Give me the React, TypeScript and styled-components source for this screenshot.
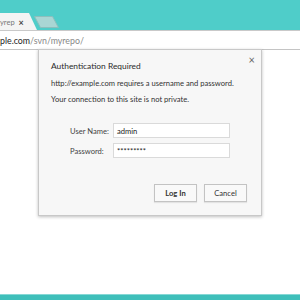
import React from "react";
import styled, { createGlobalStyle } from "styled-components";

const Global = createGlobalStyle`
  html, body { margin: 0; padding: 0; }
  body { width: 300px; height: 300px; overflow: hidden; background: #fff; font-family: Lato, "Liberation Sans", sans-serif; }
`;

const Page = styled.div`
  width: 300px;
  height: 300px;
  display: flex;
  flex-direction: column;
  overflow: hidden;
`;

const TabStrip = styled.div`
  height: 30px;
  flex: none;
  background: #4fcdc9;
  display: flex;
  align-items: flex-end;
`;

const Tab = styled.div`
  width: 37px;
  height: 17px;
  background: #f4f4f4;
  clip-path: polygon(0 0, 29px 0, 37px 100%, 0 100%);
  display: flex;
  align-items: center;
  font-size: 7.5px;
  color: #777;
  gap: 4px;
  padding-top: 1px;
  box-sizing: border-box;
`;

const TabTitle = styled.span`
  white-space: nowrap;
`;

const TabClose = styled.span`
  font-size: 9px;
  color: #444;
  font-weight: bold;
`;

const NewTab = styled.div`
  width: 17px;
  height: 10px;
  margin-bottom: 2px;
  background: #a9d6d4;
  border: 1px solid #8cbfbd;
  transform: skewX(28deg);
  border-radius: 1px;
`;

const AddressBar = styled.div`
  height: 18px;
  flex: none;
  background: #fff;
  border-top: 1px solid #c9c9c9;
  border-bottom: 1px solid #c4c4c4;
  display: flex;
  align-items: center;
`;

const Url = styled.div`
  font-size: 8.8px;
  white-space: nowrap;
  margin-top: 1px;
  color: #222;
`;

const UrlPath = styled.span`
  color: #888;
`;

const Content = styled.div`
  flex: 1;
  background: #fff;
  padding-left: 38px;
  display: flex;
  align-items: flex-start;
`;

const Dialog = styled.div`
  width: 224px;
  height: 167px;
  margin-top: -1px;
  box-sizing: border-box;
  background: #f7f7f7;
  border: 1px solid #c8c8c8;
  box-shadow: 0 1px 3px rgba(0, 0, 0, 0.25);
  padding: 9px 14px 13px 12px;
  display: flex;
  flex-direction: column;
  position: relative;
  color: #333;
`;

const Close = styled.div`
  position: absolute;
  right: 6px;
  top: 3px;
  font-size: 11px;
  color: #666;
`;

const Title = styled.div`
  font-size: 8.4px;
  color: #2a2a2a;
  line-height: 14px;
`;

const Message = styled.div<{ $gap: number }>`
  font-size: 7.6px;
  line-height: 16px;
  color: #333;
  margin-top: ${(p) => p.$gap}px;
`;

const Form = styled.div`
  display: grid;
  grid-template-columns: 43px 117px;
  row-gap: 5px;
  margin-top: 16px;
  margin-left: 19px;
  align-items: center;
`;

const Label = styled.div`
  font-size: 7.6px;
  color: #444;
  white-space: nowrap;
`;

const Input = styled.div`
  height: 15px;
  box-sizing: border-box;
  background: #fff;
  border: 1px solid #dadada;
  font-size: 7.6px;
  color: #222;
  padding-left: 3px;
  display: flex;
  align-items: center;
`;

const Buttons = styled.div`
  margin-top: auto;
  display: flex;
  justify-content: flex-end;
  gap: 7px;
`;

const Button = styled.div<{ $primary?: boolean }>`
  width: 43px;
  height: 18px;
  box-sizing: border-box;
  border: 1px solid #c3c3c3;
  background: #f9f9f9;
  box-shadow: 0 1px 1px rgba(0, 0, 0, 0.08);
  display: flex;
  align-items: center;
  justify-content: center;
  font-size: 7.6px;
  font-weight: ${(p) => (p.$primary ? 700 : 400)};
  color: #333;
`;

const BottomBar = styled.div`
  height: 5px;
  flex: none;
  background: #3fbfba;
  border-top: 1px solid #86d8d5;
`;

export default function App() {
  return (
    <Page>
      <Global />
      <TabStrip>
        <Tab>
          <TabTitle>yrep</TabTitle>
          <TabClose>×</TabClose>
        </Tab>
        <NewTab />
      </TabStrip>
      <AddressBar>
        <Url>
          ple.com<UrlPath>/svn/myrepo/</UrlPath>
        </Url>
      </AddressBar>
      <Content>
        <Dialog>
          <Close>×</Close>
          <Title>Authentication Required</Title>
          <Message $gap={2}>http://example.com requires a username and password.</Message>
          <Message $gap={0}>Your connection to this site is not private.</Message>
          <Form>
            <Label>User Name:</Label>
            <Input>admin</Input>
            <Label>Password:</Label>
            <Input>*********</Input>
          </Form>
          <Buttons>
            <Button $primary>Log In</Button>
            <Button>Cancel</Button>
          </Buttons>
        </Dialog>
      </Content>
      <BottomBar />
    </Page>
  );
}
